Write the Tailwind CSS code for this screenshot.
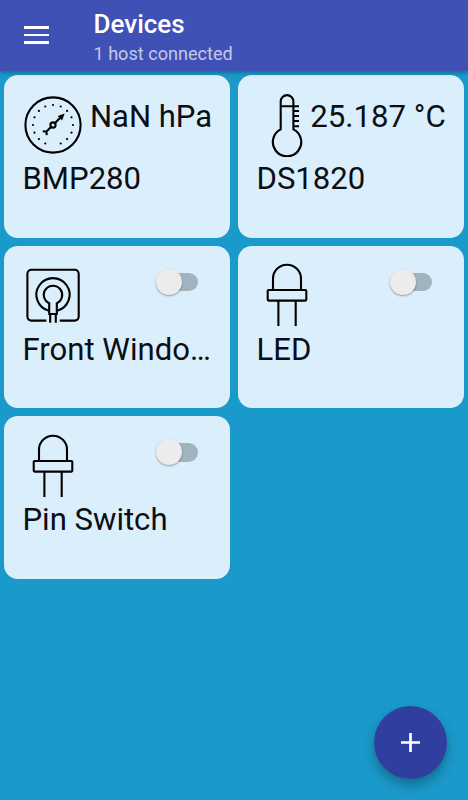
<!DOCTYPE html>
<html lang="en">
<head>
  <meta charset="UTF-8" />
  <meta name="viewport" content="width=device-width, initial-scale=1.0" />
  <title>Devices</title>
  <script src="https://cdn.jsdelivr.net/npm/@tailwindcss/browser@4"></script>
</head>
<body class="bg-[#1a9acb] h-screen overflow-hidden font-['Roboto',sans-serif] text-[#0b0f14]">

  <!-- App bar -->
  <header class="relative h-[71px] bg-[#3f51b5] flex items-start shadow-[0_1px_5px_rgba(0,0,0,0.4)]">
    <button class="ml-6 mt-[26px] flex flex-col gap-[5px]" aria-label="Menu">
      <span class="block w-[25px] h-[2.6px] bg-white"></span>
      <span class="block w-[25px] h-[2.6px] bg-white"></span>
      <span class="block w-[25px] h-[2.6px] bg-white"></span>
    </button>
    <div class="ml-[44.5px] pt-[9px]">
      <h1 class="text-[26px] leading-[30px] font-medium text-white">Devices</h1>
      <p class="mt-[4px] text-[18.1px] leading-[22px] text-white/70">1 host connected</p>
    </div>
  </header>

  <!-- Device cards -->
  <main class="grid grid-cols-2 auto-rows-[162.5px] gap-2 px-1 pt-[4.4px]">

    <section class="bg-[#dbeefc] rounded-[14px] px-[17px] pt-[17.2px] overflow-hidden">
      <div class="flex h-16">
        <svg class="size-16 shrink-0" viewBox="0 0 64 64" fill="none" stroke="#000" stroke-width="2.1">
          <circle cx="32" cy="32" r="27.6" />
          <g fill="#000" stroke="none">
            <circle cx="32" cy="12" r="1.1" />
            <circle cx="24.3" cy="13.5" r="1.1" />
            <circle cx="39.7" cy="13.5" r="1.1" />
            <circle cx="17.9" cy="17.9" r="1.1" />
            <circle cx="46.1" cy="17.9" r="1.1" />
            <circle cx="13.5" cy="24.3" r="1.1" />
            <circle cx="50.5" cy="24.3" r="1.1" />
            <circle cx="12" cy="32" r="1.1" />
            <circle cx="52" cy="32" r="1.1" />
            <circle cx="13.5" cy="39.7" r="1.1" />
            <circle cx="50.5" cy="39.7" r="1.1" />
            <circle cx="17.9" cy="46.1" r="1.1" />
            <circle cx="46.1" cy="46.1" r="1.1" />
            <circle cx="24.3" cy="50.5" r="1.1" />
            <circle cx="39.7" cy="50.5" r="1.1" />
            <path d="M43.6 20.6l-6.8 2.5 4.3 4.3z" />
          </g>
          <circle cx="32" cy="32" r="2.6" />
          <path d="M34 30l7-7M30 34l-5.5 5.5M21.8 38.3l3.6.3.4 3.6" />
        </svg>
        <span class="ml-[5px] mt-[6.8px] text-[31px] leading-9 whitespace-nowrap">NaN hPa</span>
      </div>
      <p class="mt-[4.6px] ml-[1.5px] text-[31.1px] leading-9 truncate">BMP280</p>
    </section>

    <section class="bg-[#dbeefc] rounded-[14px] px-[17px] pt-[17.2px] overflow-hidden">
      <div class="flex h-16">
        <svg class="size-16 shrink-0" viewBox="0 0 64 64" fill="none" stroke="#000" stroke-width="2.1">
          <path d="M25.7 36.4V8.5a6.3 6.3 0 0 1 12.7 0v27.9a14.2 14.2 0 1 1-12.7 0z" />
          <path d="M25.7 13.2H44M38.4 18H44M38.4 23H44M38.4 28H44M38.4 33.2H44" />
        </svg>
        <span class="-ml-[8.8px] mt-[6.8px] text-[31.2px] leading-9 whitespace-nowrap">25.187 °C</span>
      </div>
      <p class="mt-[4.6px] ml-[1.5px] text-[31.1px] leading-9 truncate">DS1820</p>
    </section>

    <section class="bg-[#dbeefc] rounded-[14px] px-[17px] pt-[17.2px] overflow-hidden">
      <div class="flex h-16 justify-between">
        <svg class="size-16 shrink-0" viewBox="0 0 64 64" fill="none" stroke="#000" stroke-width="2.1">
          <path d="M25.4 57.6H10.4a4 4 0 0 1-4-4V10.7a4 4 0 0 1 4-4h43.3a4 4 0 0 1 4 4v42.9a4 4 0 0 1-4 4h-15" />
          <path d="M27.8 47.8a16.6 16.6 0 1 1 8.4 0" />
          <path d="M28.2 51V40.3a9.2 9.2 0 1 1 7.6 0V51z" />
          <path d="M29.2 51v8.8M34.8 51v8.8" />
        </svg>
        <span class="relative mt-[9.5px] mr-[15px] w-[36px] h-[18.5px] rounded-full bg-[#a0b3be]">
          <span class="absolute -left-[6.5px] -top-[4px] size-[26px] rounded-full bg-[#ececec] shadow-[0_1px_2px_rgba(0,0,0,0.35)]"></span>
        </span>
      </div>
      <p class="mt-[4.6px] ml-[1.5px] text-[31.1px] leading-9 truncate">Front Window</p>
    </section>

    <section class="bg-[#dbeefc] rounded-[14px] px-[17px] pt-[17.2px] overflow-hidden">
      <div class="flex h-16 justify-between">
        <svg class="size-16 shrink-0" viewBox="0 0 64 64" fill="none" stroke="#000" stroke-width="2.1">
          <path d="M18 27V15.7a14 14 0 0 1 28 0V27" />
          <rect x="12.7" y="27" width="38.6" height="10.6" rx="1" />
          <path d="M23.4 37.6V63M40.7 37.6V63" />
        </svg>
        <span class="relative mt-[9.5px] mr-[15px] w-[36px] h-[18.5px] rounded-full bg-[#a0b3be]">
          <span class="absolute -left-[6.5px] -top-[4px] size-[26px] rounded-full bg-[#ececec] shadow-[0_1px_2px_rgba(0,0,0,0.35)]"></span>
        </span>
      </div>
      <p class="mt-[4.6px] ml-[1.5px] text-[31.1px] leading-9 truncate">LED</p>
    </section>

    <section class="bg-[#dbeefc] rounded-[14px] px-[17px] pt-[17.2px] overflow-hidden">
      <div class="flex h-16 justify-between">
        <svg class="size-16 shrink-0" viewBox="0 0 64 64" fill="none" stroke="#000" stroke-width="2.1">
          <path d="M18 27V15.7a14 14 0 0 1 28 0V27" />
          <rect x="12.7" y="27" width="38.6" height="10.6" rx="1" />
          <path d="M23.4 37.6V63M40.7 37.6V63" />
        </svg>
        <span class="relative mt-[9.5px] mr-[15px] w-[36px] h-[18.5px] rounded-full bg-[#a0b3be]">
          <span class="absolute -left-[6.5px] -top-[4px] size-[26px] rounded-full bg-[#ececec] shadow-[0_1px_2px_rgba(0,0,0,0.35)]"></span>
        </span>
      </div>
      <p class="mt-[4.6px] ml-[1.5px] text-[31.1px] leading-9 truncate">Pin Switch</p>
    </section>
  </main>

  <!-- Add device -->
  <button class="fixed right-[21px] bottom-[21px] size-[73px] rounded-full bg-[#303f9f] flex items-center justify-center shadow-[0_6px_12px_rgba(0,0,0,0.3)]" aria-label="Add device">
    <svg class="size-[19px]" viewBox="0 0 19 19" stroke="#fff" stroke-width="2.7">
      <path d="M9.5 0v19M0 9.5h19" />
    </svg>
  </button>

</body>
</html>
